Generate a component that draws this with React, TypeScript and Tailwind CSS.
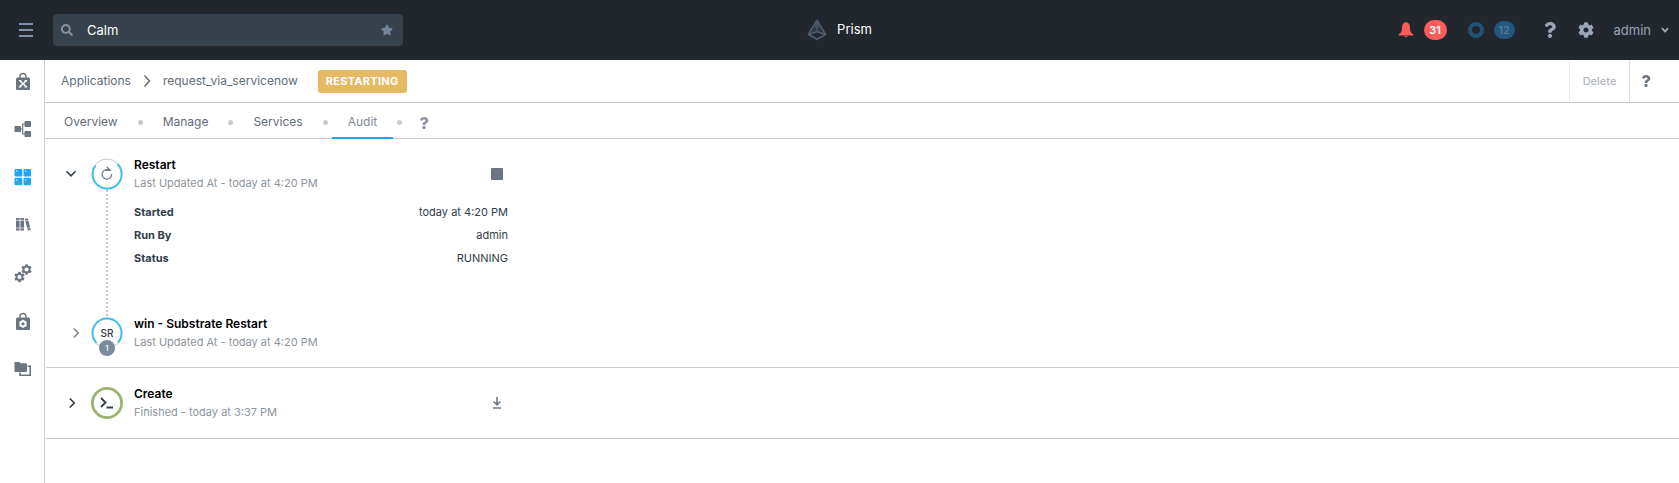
import type { ReactNode } from "react";
import { FaCog, FaQuestion, FaSearch, FaStar } from "react-icons/fa";

const LockShape = () => (
  <>
    <path d="M6 6V4.500a3 3 0 0 1 6 0V6" fill="none" stroke="currentColor" strokeWidth="1.400" />
    <path d="M3 5.500h12l1 1V17a1 1 0 0 1-1 1H3a1 1 0 0 1-1-1V6.500z" />
  </>
);

const gearTeeth = [0, 60, 120];

const Gear = ({ cx, cy }: { cx: number; cy: number }) => (
  <g transform={`translate(${cx} ${cy})`}>
    {gearTeeth.map((a) => (
      <rect key={a} x="-1.300" y="-5.200" width="2.600" height="10.400" transform={`rotate(${a})`} />
    ))}
    <circle r="3.900" />
    <circle r="2.100" fill="white" />
  </g>
);

const navItems: { label: string; active?: boolean; icon: ReactNode }[] = [
  {
    label: "Marketplace",
    icon: (
      <>
        <LockShape />
        <path d="M5.500 8.500 12.500 15M12.500 8.500 5.500 15" stroke="white" strokeWidth="1.600" />
        <path d="M4.800 8.500h2.600M10.600 8.500h2.600M4.800 15h2.600M10.600 15h2.600" stroke="white" />
      </>
    ),
  },
  {
    label: "Blueprints",
    icon: (
      <>
        <rect x="0.500" y="6" width="6.500" height="6" rx="0.800" />
        <rect x="10.500" y="1" width="6.500" height="6" rx="0.800" />
        <rect x="10.500" y="11" width="6.500" height="6" rx="0.800" />
        <path d="M7 9h1.500M11 4H8.700v10H11" fill="none" stroke="currentColor" strokeWidth="1.200" />
      </>
    ),
  },
  {
    label: "Applications",
    active: true,
    icon: (
      <>
        <rect x="0.500" y="1" width="7.800" height="7.500" rx="1.300" />
        <rect x="9.500" y="1" width="7.500" height="7.500" rx="1.300" />
        <rect x="0.500" y="9.800" width="7.800" height="7.500" rx="1.300" />
        <rect x="9.500" y="9.800" width="7.500" height="7.500" rx="1.300" />
        <path d="M2 3h1.300M11 3h1.300M2 12h1.300M11 12h1.300" stroke="white" strokeWidth="1.100" />
      </>
    ),
  },
  {
    label: "Library",
    icon: (
      <>
        <rect x="2" y="2" width="3.600" height="12.500" />
        <rect x="6.400" y="2" width="3.600" height="12.500" />
        <path d="m10.800 3 3-.8 3 11.500-3 .8z" />
        <path d="M2 4.300h8M2 12h8M11.200 5l3.200-.8M13.200 12.400l3.200-.8" stroke="white" strokeWidth="0.700" />
      </>
    ),
  },
  {
    label: "Settings",
    icon: (
      <>
        <Gear cx={12.500} cy={5.500} />
        <Gear cx={5.500} cy={13} />
      </>
    ),
  },
  {
    label: "Marketplace Manager",
    icon: (
      <>
        <LockShape />
        <circle cx="9" cy="11.800" r="2.600" fill="none" stroke="white" strokeWidth="2" />
        <path d="M9 7.800v1.500M9 14.300v1.500M5.500 9.800l1.300.7M11.200 13.100l1.300.7M12.500 9.800l-1.300.7M6.800 13.100l-1.300.7" stroke="white" strokeWidth="1.400" />
      </>
    ),
  },
  {
    label: "Projects",
    icon: (
      <>
        <path d="M0.500 2h4.800l1.200 1.200h5.500a1 1 0 0 1 1 1V11a1 1 0 0 1-1 1h-10.500a1 1 0 0 1-1-1V2z" />
        <path d="M13.500 6.200h2.700v9H6v-2.700" fill="none" stroke="currentColor" strokeWidth="1.600" />
      </>
    ),
  },
];

const Chevron = ({ down = false }: { down?: boolean }) => (
  <svg viewBox="0 0 12 12" className="size-3" fill="none" stroke="currentColor" strokeWidth="1.600">
    <path d={down ? "M1.500 3.300 6 7.800l4.500-4.500" : "M3.800 1.500 8.300 6l-4.500 4.500"} />
  </svg>
);

const PrismLogo = () => (
  <svg viewBox="0 0 20 22" className="h-[22px] w-5 text-[#4f5d70]" fill="none" stroke="currentColor" strokeWidth="1.800" strokeLinejoin="round">
    <path d="M10 1.500 1.500 15.500 10 20.300l8.500-4.800z" />
    <path d="M10 2v10.500M1.800 15.500 10 12.500l8.200 3" strokeWidth="1.500" />
    <path d="M10 2 6.800 13.600M10 2l3.200 11.600" strokeWidth="0.800" />
  </svg>
);

const Header = () => (
  <header className="grid h-[60px] grid-cols-[1fr_auto_1fr] items-center bg-[#22272e]">
    <div className="flex items-center">
      <button aria-label="Menu" className="ml-[19px] text-[#7f92a8]">
        <svg viewBox="0 0 14 16" className="h-4 w-3.5" stroke="currentColor" strokeWidth="2">
          <path d="M0 2h14M0 8h14M0 14h14" />
        </svg>
      </button>
      <div className="ml-5 flex h-8 w-[350px] items-center rounded bg-[#38424c] px-2">
        <FaSearch className="size-3 text-[#8a929b]" aria-hidden="true" />
        <input aria-label="Search" defaultValue="Calm" className="ml-3.5 min-w-0 flex-1 bg-transparent pt-0.5 text-[13px] text-white outline-none" />
        <button aria-label="Add to favorites" className="mr-0.5 text-[#73859a]">
          <FaStar className="size-3" />
        </button>
      </div>
    </div>
    <a href="#prism" className="flex items-center gap-2.5 text-[13px] text-white">
      <PrismLogo />
      Prism
    </a>
    <div className="flex items-center justify-end pr-2.5 text-[#9aa5b8]">
      <button aria-label="Alerts" className="flex items-center gap-2.5">
        <svg viewBox="0 0 16 16" className="size-4 text-[#fc5d5b]" fill="currentColor">
          <path d="M8 0a2 2 0 0 0-1.500.8C4.500 1.500 4 3.500 4 6c0 3-.8 4.800-2.800 6-.9.500-1 1.500-.2 1.500h14c.8 0 .7-1-.2-1.500C12.800 10.800 12 9 12 6c0-2.500-.5-4.500-2.500-5.200A2 2 0 0 0 8 0zM6 14.300a2.200 1.700 0 0 0 4 0z" />
        </svg>
        <span className="flex h-5 w-[23px] items-center justify-center rounded-full bg-[#fc5d5b] text-[11px] font-semibold text-white">31</span>
      </button>
      <button aria-label="Tasks" className="ml-[21px] flex items-center gap-2.5">
        <span className="size-4 rounded-full border-4 border-[#235273]" />
        <span className="flex h-[18px] w-[21px] items-center justify-center rounded-full bg-[#205880] text-[11px] font-medium text-[#5e7d95]">12</span>
      </button>
      <button aria-label="Help" className="ml-[27px]">
        <FaQuestion className="size-4" />
      </button>
      <button aria-label="Settings" className="ml-5">
        <FaCog className="size-4" />
      </button>
      <button className="ml-5 flex items-center gap-2.5 pt-0.5 text-[13px]">
        admin
        <svg viewBox="0 0 8 8" className="size-2" fill="none" stroke="currentColor" strokeWidth="1.800">
          <path d="M1 1.200 4 4.600l3-3.400" />
        </svg>
      </button>
    </div>
  </header>
);

const Sidebar = () => (
  <nav aria-label="Main" className="flex w-[45px] shrink-0 flex-col items-center gap-[30px] border-r border-[#c9ced3] pt-3 pl-0.5">
    {navItems.map((item) => (
      <a key={item.label} href="#nav" aria-label={item.label} className={item.active ? "text-[#22a5f7]" : "text-[#6b757f]"}>
        <svg viewBox="0 0 18 18" className="size-[18px] overflow-visible" fill="currentColor">
          {item.icon}
        </svg>
      </a>
    ))}
  </nav>
);

const tabs = ["Overview", "Manage", "Services", "Audit"];

const Tabs = () => (
  <div className="flex h-9 items-stretch border-b border-[#c8cacc] pl-[3px]">
    {tabs.map((tab) => (
      <div key={tab} className="flex items-stretch">
        <button
          className={
            tab === "Audit"
              ? "-mb-px border-b-2 border-[#22a5f7] px-4 pt-1 text-xs text-[#7f8a96]"
              : "-mb-px border-b-2 border-transparent px-4 pt-1 text-xs text-[#626d77]"
          }
        >
          {tab}
        </button>
        <span className="mx-1 mt-1 size-[5px] self-center rounded-full bg-[#c9cbcd]" />
      </div>
    ))}
    <button aria-label="Help with audit" className="ml-3 pt-1 text-[#8a939d]">
      <FaQuestion className="size-3" />
    </button>
  </div>
);

const Title = ({ title, sub }: { title: string; sub: string }) => (
  <div>
    <h2 className="text-xs leading-[18px] font-semibold text-black">{title}</h2>
    <p className="text-[11px] leading-[18px] text-[#8d959c]">{sub}</p>
  </div>
);

const details = [
  ["Started", "today at 4:20 PM"],
  ["Run By", "admin"],
  ["Status", "RUNNING"],
];

const AuditLog = () => (
  <div className="ml-px">
    <section className="border-b border-[#c8cacc] pb-4">
      <div className="grid grid-cols-[45px_32px_374px] items-center pt-[17px]">
        <button aria-label="Collapse Restart" aria-expanded="true" className="ml-[19px] w-3 text-[#323d49]">
          <Chevron down />
        </button>
        <svg viewBox="0 0 32 32" className="size-8" fill="none">
          <circle cx="16" cy="16" r="15" stroke="#c3c8cc" />
          <path d="M4.500 7.500A14.500 14.500 0 1 0 26.500 6" stroke="#43bdf0" strokeWidth="2" />
          <path d="M18.500 12.300A4.800 4.800 0 1 0 20.700 16M15.800 8.800 19.300 12.500H14.800" stroke="#6b757f" strokeWidth="1.200" />
        </svg>
        <div className="ml-[11px] flex items-center justify-between">
          <Title title="Restart" sub="Last Updated At - today at 4:20 PM" />
          <button aria-label="Stop" className="mr-[-6px] size-3 rounded-[1px] bg-[#6b757f]" />
        </div>
      </div>
      <div className="grid grid-cols-[45px_32px_385px]">
        <div className="col-start-2 -my-0.5 w-0.5 justify-self-center bg-[repeating-linear-gradient(to_bottom,#c5c8cb_0_2px,transparent_2px_4px)]" />
        <table className="mt-[9px] mb-[45px] ml-[11px] w-[374px] text-[11px] text-[#323d49]">
          <tbody>
            {details.map(([name, value]) => (
              <tr key={name} className="h-[23px]">
                <th scope="row" className="text-left font-bold">{name}</th>
                <td className="text-right">{value}</td>
              </tr>
            ))}
          </tbody>
        </table>
      </div>
      <div className="grid grid-cols-[45px_32px_374px] items-center">
        <button aria-label="Expand win - Substrate Restart" aria-expanded="false" className="ml-6 w-3 text-[#7f8993]">
          <Chevron />
        </button>
        <div className="relative flex size-8 items-center justify-center text-[10px] font-medium text-[#323d49]">
          <svg viewBox="0 0 32 32" className="absolute inset-0 size-8" fill="none">
            <circle cx="16" cy="16" r="15" stroke="#c3c8cc" />
            <path d="M5.500 26A14.500 14.500 0 1 1 27 25.500" stroke="#43bdf0" strokeWidth="2" />
          </svg>
          SR
          <span className="absolute top-[23px] left-2 flex size-4 items-center justify-center rounded-full bg-[#7b8a9c] text-[8px] text-white">1</span>
        </div>
        <div className="ml-[11px]">
          <Title title="win - Substrate Restart" sub="Last Updated At - today at 4:20 PM" />
        </div>
      </div>
    </section>
    <section className="grid h-[71px] grid-cols-[45px_32px_374px] items-center border-b border-[#c8cacc]">
      <button aria-label="Expand Create" aria-expanded="false" className="ml-5 w-3 text-[#323d49]">
        <Chevron />
      </button>
      <svg viewBox="0 0 32 32" className="size-8" fill="none">
        <circle cx="16" cy="16" r="14.600" stroke="#9db373" strokeWidth="2.800" />
        <path d="m10 11 4.500 4.500L10 20M15.500 20.500H22" stroke="#323d49" strokeWidth="1.800" />
      </svg>
      <div className="ml-[11px] flex items-center justify-between">
        <Title title="Create" sub="Finished - today at 3:37 PM" />
        <button aria-label="Download log" className="mr-[-6px] text-[#6b757f]">
          <svg viewBox="0 0 12 12" className="size-3" fill="none" stroke="currentColor" strokeWidth="1.600">
            <path d="M6 0v7.500M2.600 4.500 6 7.900l3.400-3.400M2 11h8" />
          </svg>
        </button>
      </div>
    </section>
  </div>
);

export default function App() {
  return (
    <div className="flex min-h-screen flex-col bg-white font-['Inter',sans-serif]">
      <Header />
      <div className="flex flex-1">
        <Sidebar />
        <main className="min-w-0 flex-1">
          <div className="flex h-[43px] items-stretch justify-between border-b border-[#c8cacc]">
            <div className="flex items-center pl-4 text-xs text-[#626d77]">
              <a href="#applications">Applications</a>
              <svg viewBox="0 0 12 12" className="mx-2.5 size-3" fill="none" stroke="currentColor" strokeWidth="1.500">
                <path d="m3.500.5 5 5.500-5 5.500" />
              </svg>
              <span>request_via_servicenow</span>
              <span className="ml-5 flex h-[23px] items-center rounded-[3px] bg-[#e5ba63] px-2 text-[11px] font-bold tracking-wide text-white">RESTARTING</span>
            </div>
            <div className="flex items-stretch">
              <button disabled className="w-[60px] border-l border-[#ebecee] text-[11px] font-medium text-[#b3b8bd]">Delete</button>
              <button aria-label="Help" className="w-[50px] border-l border-[#dcdfe1] pl-2.5 text-[#6b757f]">
                <FaQuestion className="size-3" />
              </button>
            </div>
          </div>
          <Tabs />
          <AuditLog />
        </main>
      </div>
    </div>
  );
}
